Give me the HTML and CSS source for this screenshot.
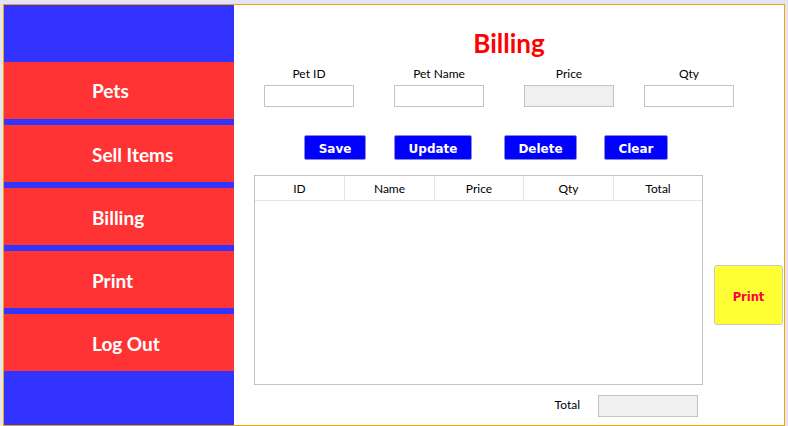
FILE: index.html
```html
<!DOCTYPE html>
<html>
<head>
<meta charset="utf-8">
<link rel="stylesheet" href="styles.css">
</head>
<body>
<div class="window">
  <nav class="sidebar">
    <div class="nav-item nav-first">Pets</div>
    <div class="nav-item">Sell Items</div>
    <div class="nav-item">Billing</div>
    <div class="nav-item">Print</div>
    <div class="nav-item">Log Out</div>
  </nav>
  <main class="main">
    <h1 class="title">Billing</h1>
    <div class="fields">
      <div class="field"><label class="label">Pet ID</label><div class="input"></div></div>
      <div class="field"><label class="label">Pet Name</label><div class="input"></div></div>
      <div class="field"><label class="label">Price</label><div class="input input-disabled"></div></div>
      <div class="field"><label class="label">Qty</label><div class="input"></div></div>
    </div>
    <div class="actions">
      <button class="btn btn-save">Save</button>
      <button class="btn btn-update">Update</button>
      <button class="btn btn-delete">Delete</button>
      <button class="btn btn-clear">Clear</button>
    </div>
    <div class="grid-row">
      <div class="table">
        <div class="thead">
          <div class="th">ID</div>
          <div class="th">Name</div>
          <div class="th">Price</div>
          <div class="th">Qty</div>
          <div class="th">Total</div>
        </div>
      </div>
      <button class="print-btn">Print</button>
    </div>
    <div class="total-row">
      <span class="total-label">Total</span>
      <div class="input input-disabled input-total"></div>
    </div>
  </main>
</div>
</body>
</html>
```

FILE: styles.css
```css
* { box-sizing: border-box; }
html, body { margin: 0; padding: 0; }
body {
  background: #e4e4f4;
  font-family: Lato, "Noto Sans", sans-serif;
  width: 788px;
  height: 426px;
  overflow: hidden;
}
.window {
  margin: 4px 0 0 3px;
  width: 782px;
  height: 422px;
  border: 1px solid #f5a300;
  display: flex;
  background: #fff;
}
.sidebar {
  width: 230px;
  flex: none;
  background: #3333ff;
  padding-top: 57px;
  display: flex;
  flex-direction: column;
  gap: 6px;
}
.nav-item {
  height: 57px;
  background: #ff3333;
  color: #fff;
  font-weight: 700;
  font-size: 19px;
  display: flex;
  align-items: center;
  padding-left: 88px;
  padding-top: 2px;
}
.nav-first {
  padding-top: 0;
}
.main {
  flex: 1;
  display: flex;
  flex-direction: column;
  padding-top: 23px;
}
.title {
  margin: 0;
  height: 30px;
  line-height: 30px;
  font-size: 26px;
  font-weight: 700;
  color: #ff0000;
  text-align: center;
}
.fields {
  margin-top: 9px;
  padding-left: 30px;
  display: grid;
  grid-template-columns: 130px 130px 120px 90px;
}
.field {
  width: 90px;
  display: flex;
  flex-direction: column;
  align-items: center;
}
.label {
  font-size: 12px;
  line-height: 14px;
  height: 14px;
  color: #000;
}
.input {
  margin-top: 4px;
  width: 90px;
  height: 22px;
  border: 1px solid #c3c3c3;
  background: #fff;
}
.input-disabled { background: #f0f0f0; }
.actions {
  margin-top: 28px;
  padding-left: 70px;
  display: grid;
  grid-template-columns: 90px 110px 100px auto;
  justify-items: start;
}
.btn {
  height: 25px;
  padding: 2px 0 0;
  margin: 0;
  background: #0000ff;
  color: #fff;
  border: 1px solid #8a8ad6;
  border-radius: 2px;
  font-family: "DejaVu Sans", sans-serif;
  font-weight: 700;
  font-size: 12px;
}
.btn-save { width: 62px; }
.btn-update { width: 78px; }
.btn-delete { width: 73px; }
.btn-clear { width: 64px; }
.grid-row {
  margin-top: 15px;
  padding-left: 20px;
  display: flex;
  align-items: flex-start;
}
.table {
  width: 449px;
  height: 210px;
  border: 1px solid #c3c3c3;
  background: #fff;
}
.thead {
  display: grid;
  grid-template-columns: 90px 90px 89px 90px 1fr;
  height: 25px;
  border-bottom: 1px solid #e5e5e5;
}
.th {
  font-size: 12px;
  display: flex;
  align-items: center;
  justify-content: center;
  border-right: 1px solid #e5e5e5;
  color: #000;
}
.th:last-child { border-right: none; }
.print-btn {
  margin: 90px 0 0 11px;
  width: 69px;
  height: 60px;
  padding: 3px 0 0;
  background: #ffff33;
  border: 1px solid #c8c8c8;
  border-radius: 3px;
  color: #ff0040;
  font-family: "DejaVu Sans", sans-serif;
  font-weight: 700;
  font-size: 11.5px;
}
.total-row {
  margin-top: 10px;
  padding-right: 86px;
  display: flex;
  justify-content: flex-end;
  align-items: center;
  gap: 18px;
}
.total-label {
  font-size: 12px;
  color: #000;
  padding-bottom: 3px;
}
.input-total {
  margin-top: 0;
  width: 100px;
}
```
